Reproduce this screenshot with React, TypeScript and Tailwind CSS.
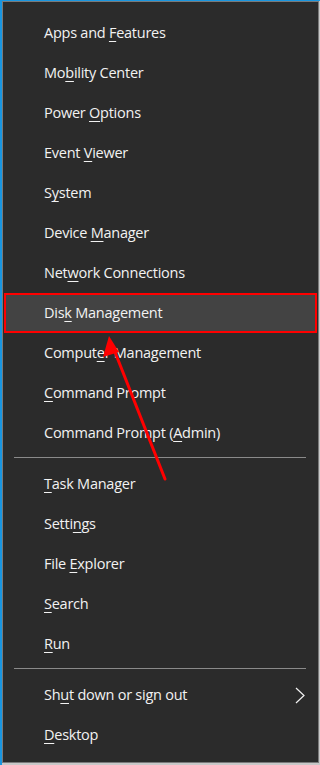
import React from 'react'

type Item = { pre: string; key: string; post: string }

const groups: Item[][] = [
  [
    { pre: 'Apps and ', key: 'F', post: 'eatures' },
    { pre: 'Mo', key: 'b', post: 'ility Center' },
    { pre: 'Power ', key: 'O', post: 'ptions' },
    { pre: 'Event ', key: 'V', post: 'iewer' },
    { pre: 'S', key: 'y', post: 'stem' },
    { pre: 'Device ', key: 'M', post: 'anager' },
    { pre: 'Net', key: 'w', post: 'ork Connections' },
    { pre: 'Dis', key: 'k', post: ' Management' },
    { pre: 'Comput', key: 'e', post: 'r Management' },
    { pre: '', key: 'C', post: 'ommand Prompt' },
    { pre: 'Command Prompt (', key: 'A', post: 'dmin)' },
  ],
  [
    { pre: '', key: 'T', post: 'ask Manager' },
    { pre: 'Setti', key: 'n', post: 'gs' },
    { pre: 'File ', key: 'E', post: 'xplorer' },
    { pre: '', key: 'S', post: 'earch' },
    { pre: '', key: 'R', post: 'un' },
  ],
  [
    { pre: 'Sh', key: 'u', post: 't down or sign out' },
    { pre: '', key: 'D', post: 'esktop' },
  ],
]

function Row({ item }: { item: Item }) {
  const active = item.pre === 'Dis'
  const submenu = item.pre === 'Sh'
  return (
    <div
      className={`relative h-10 flex items-center pr-3 mx-px ${
        active ? 'bg-[#434343] border-2 border-[#ff0000] pl-[38px]' : 'pl-[40px]'
      }`}
    >
      <span className="text-[14.5px] text-[#f2f2f2] tracking-[-0.25px]">
        {item.pre}
        <span className="underline underline-offset-[3px] decoration-1">{item.key}</span>
        {item.post}
      </span>
      {submenu && (
        <svg className="absolute right-[12px] top-[12px]" width="10" height="17" viewBox="0 0 10 17">
          <path d="M1 1 L9 8.5 L1 16" fill="none" stroke="#f2f2f2" strokeWidth="1.2" />
        </svg>
      )}
    </div>
  )
}

export default function App() {
  return (
    <div
      className="relative w-[320px] h-[765px] bg-[#c8c8c8] border-t border-l-2 border-[#1996e0] overflow-hidden"
      style={{ fontFamily: '"Segoe UI", "Open Sans", "Noto Sans", sans-serif' }}
    >
      <div className="w-[317px] h-[762px] bg-[#2b2b2b] border border-[#7a7a7a] pt-[11px]">
        {groups.map((g, i) => (
          <div key={i}>
            {i > 0 && <div className="ml-[11px] mr-[12px] mt-[4px] mb-[6px] h-px bg-[#8a8a8a]" />}
            {g.map((it) => (
              <Row key={it.pre + it.key} item={it} />
            ))}
          </div>
        ))}
      </div>
      <svg className="absolute left-0 top-0 pointer-events-none" width="320" height="765">
        <line x1="163" y1="478" x2="111" y2="346" stroke="#ff0000" strokeWidth="3" strokeLinecap="round" />
        <polygon points="107,335 117,351 101,356" fill="#ff0000" />
      </svg>
    </div>
  )
}
